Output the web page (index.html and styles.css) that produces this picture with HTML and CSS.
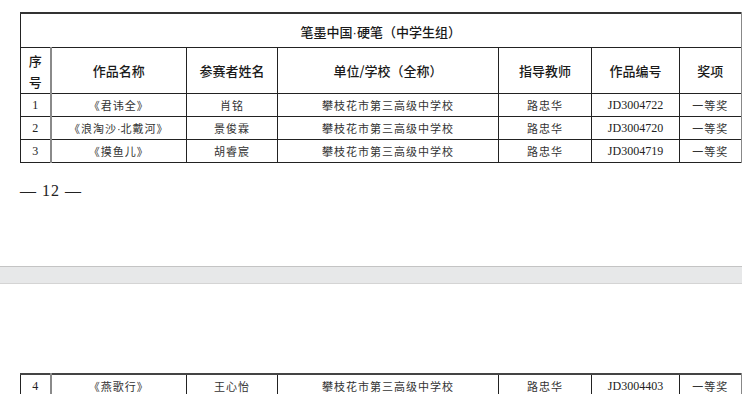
FILE: index.html
```html
<!DOCTYPE html>
<html lang="zh-CN">
<head>
<meta charset="utf-8">
<title>笔墨中国·硬笔（中学生组）</title>
<link rel="stylesheet" href="styles.css">
</head>
<body>
<div class="page page-one">
  <table class="grid">
    <colgroup>
      <col class="c1"><col class="c2"><col class="c3"><col class="c4"><col class="c5"><col class="c6"><col class="c7">
    </colgroup>
    <tr class="title-row"><th colspan="7" class="title">笔墨中国<span class="dot">·</span>硬笔（中学生组）</th></tr>
    <tr class="head-row">
      <th class="first">序<br>号</th>
      <th>作品名称</th>
      <th>参赛者姓名</th>
      <th>单位/学校（全称）</th>
      <th>指导教师</th>
      <th>作品编号</th>
      <th class="last">奖项</th>
    </tr>
    <tr class="row">
      <td class="first num">1</td><td>《君讳全》</td><td>肖铭</td><td>攀枝花市第三高级中学校</td><td>路忠华</td><td class="num">JD3004722</td><td class="last">一等奖</td>
    </tr>
    <tr class="row">
      <td class="first num">2</td><td>《浪淘沙<span class="dot">·</span>北戴河》</td><td>景俊霖</td><td>攀枝花市第三高级中学校</td><td>路忠华</td><td class="num">JD3004720</td><td class="last">一等奖</td>
    </tr>
    <tr class="row">
      <td class="first num">3</td><td>《摸鱼儿》</td><td>胡睿宸</td><td>攀枝花市第三高级中学校</td><td>路忠华</td><td class="num">JD3004719</td><td class="last">一等奖</td>
    </tr>
  </table>
  <div class="page-num">— 12 —</div>
</div>
<div class="page-gap"></div>
<div class="page page-two">
  <table class="grid">
    <colgroup>
      <col class="c1"><col class="c2"><col class="c3"><col class="c4"><col class="c5"><col class="c6"><col class="c7">
    </colgroup>
    <tr class="row">
      <td class="first num">4</td><td>《燕歌行》</td><td>王心怡</td><td>攀枝花市第三高级中学校</td><td>路忠华</td><td class="num">JD3004403</td><td class="last">一等奖</td>
    </tr>
  </table>
</div>
</body>
</html>
```

FILE: styles.css
```css
html, body {
  margin: 0;
  padding: 0;
  background: #ffffff;
}
body {
  width: 742px;
  overflow: hidden;
  font-family: "Noto Sans CJK SC", sans-serif;
  color: #222;
}
.page {
  padding-left: 20px;
  box-sizing: border-box;
}
.page-one {
  height: 266px;
  padding-top: 12px;
}
.page-two {
  padding-top: 89px;
  height: 110px;
  overflow: hidden;
}
.page-gap {
  height: 16px;
  background: #e7e8e9;
  border-top: 1px solid #c4c4c4;
  border-bottom: 1px solid #d4d4d4;
}
.grid {
  border-collapse: collapse;
  table-layout: fixed;
  width: 721px;
}
.c1 { width: 30px; }
.c2 { width: 136px; }
.c3 { width: 91px; }
.c4 { width: 221px; }
.c5 { width: 93px; }
.c6 { width: 88px; }
.c7 { width: 62px; }
.grid th,
.grid td {
  border: 1px solid #222;
  padding: 0;
  text-align: center;
  vertical-align: middle;
}
.grid th {
  font-size: 13px;
  font-weight: 500;
  color: #1a1a1a;
}
.grid .title-row th {
  height: 32px;
  border-top: 2px solid #333;
  border-right: 2px solid #888;
  padding-top: 1px;
  font-size: 13px;
}
.dot {
  font-family: "Liberation Sans", sans-serif;
  letter-spacing: 0;
}
.head-row th {
  height: 45px;
  line-height: 21px;
}
.grid .first {
  border-right: 2px solid #8a8a8a;
}
.grid .last {
  border-right: 2px solid #888;
}
.row td {
  height: 22px;
  font-size: 11px;
  letter-spacing: 1px;
  color: #333;
  line-height: 14px;
}
.row td.num {
  font-family: "Liberation Serif", "Noto Sans CJK SC", serif;
  font-size: 12px;
  letter-spacing: 0;
  color: #222;
}
.page-two .grid .row td {
  border-top: 2px solid #444;
}
.page-num {
  margin-top: 19px;
  font-family: "Liberation Serif", serif;
  font-size: 16px;
  line-height: 18px;
  letter-spacing: 1px;
  color: #222;
}
```
